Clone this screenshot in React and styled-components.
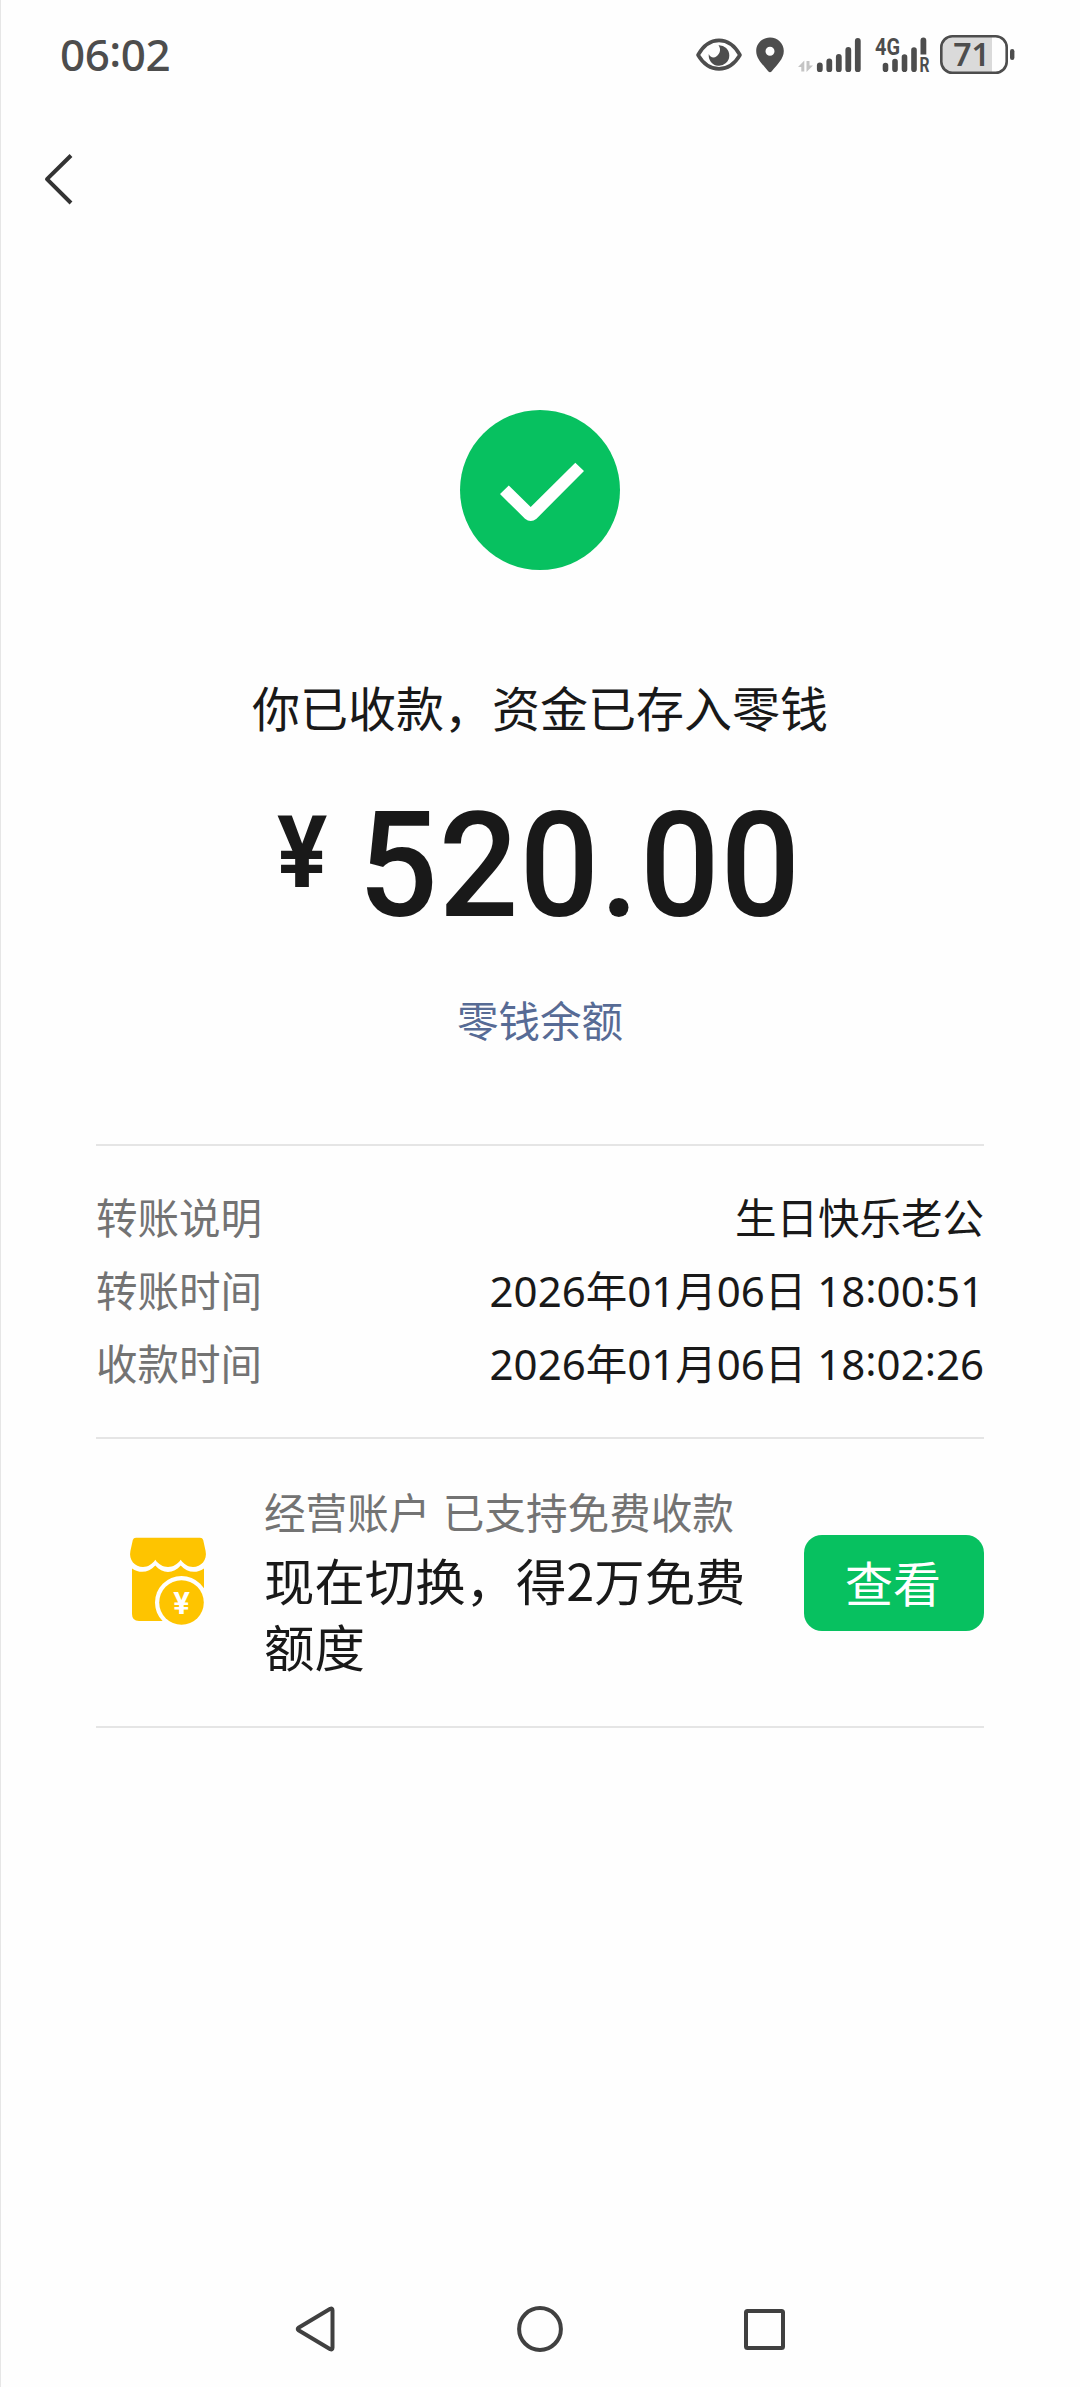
import React from 'react';
import styled, { createGlobalStyle } from 'styled-components';

const cjk = '"Noto Sans CJK SC", sans-serif';
const latin = '"Noto Sans", "Noto Sans CJK SC", sans-serif';

const GlobalStyle = createGlobalStyle`
  * { box-sizing: border-box; }
  body { margin: 0; background: #fefefe; font-family: ${cjk}; }
  svg { display: block; flex: none; overflow: visible; }
`;

const Screen = styled.div`
  width: 1080px;
  height: 2387px;
  display: flex;
  flex-direction: column;
  background: #fefefe;
  color: #191919;
  box-shadow: inset 1px 0 0 #e6e6e6;
`;

const StatusBar = styled.header`
  height: 110px;
  padding: 0 65px 0 60px;
  display: flex;
  align-items: center;
  justify-content: space-between;
  color: #4d4d4d;
`;

const Clock = styled.time`
  margin-bottom: 4px;
  font: 500 44px/50px ${latin};
  letter-spacing: -0.5px;
`;

const Colon = styled.span`
  vertical-align: ${(p) => p.$lift}px;
  line-height: 1;
`;

const StatusIcons = styled.div`
  display: flex;
  align-items: center;
`;

const Gap = styled.span`
  width: ${(p) => p.$w}px;
`;

const TitleBar = styled.nav`
  height: 137px;
  padding-left: 43px;
  display: flex;
  align-items: center;
`;

const Hero = styled.section`
  height: 897px;
  padding-top: 163px;
  display: flex;
  flex-direction: column;
  align-items: center;
`;

const Headline = styled.h1`
  margin: 106px 0 0;
  font-size: 48px;
  line-height: 60px;
  font-weight: 400;
`;

const Amount = styled.div`
  margin-top: 58px;
  padding-left: 5px;
  height: 144px;
  display: flex;
  align-items: flex-start;
  font-family: Roboto, sans-serif;
  font-weight: 500;
`;

const Currency = styled.span`
  font-size: 101px;
  line-height: 118px;
  font-weight: 700;
  margin-right: 20px;
  transform: scaleX(0.93);
`;

const Figure = styled.span`
  font-size: 146px;
  line-height: 145px;
  letter-spacing: 1px;
  transform: scaleX(0.96);
`;

const BalanceLink = styled.a`
  margin-top: 53px;
  font-size: 41.5px;
  line-height: 56px;
  color: #576b95;
`;

const Divider = styled.hr`
  width: 888px;
  height: 2px;
  margin: 0 auto;
  border: 0;
  background: #e5e5e5;
  flex: none;
`;

const Details = styled.dl`
  margin: 0;
  padding: 34px 96px 0;
  height: 291px;
`;

const DetailRow = styled.div`
  height: 73px;
  display: flex;
  justify-content: space-between;
  align-items: center;
  font-size: 41.5px;
  line-height: 73px;
`;

const Term = styled.dt`
  color: #737373;
`;

const Value = styled.dd`
  margin: 0;
  white-space: pre;
`;

const Digits = styled.span`
  font-family: ${latin};
  font-size: 42px;
`;

const Promo = styled.section`
  height: 287px;
  padding: 0 96px 0 130px;
  display: flex;
  align-items: center;
`;

const ShopBadge = styled.div`
  margin-bottom: 4px;
`;

const PromoText = styled.div`
  flex: 1;
  margin: 0 0 11px 58px;
`;

const PromoNote = styled.div`
  font-size: 41.6px;
  line-height: 72px;
  word-spacing: 3px;
  color: #737373;
`;

const PromoTitle = styled.div`
  width: 488px;
  font-size: 50.4px;
  line-height: 66px;
`;

const ViewButton = styled.button`
  width: 180px;
  height: 96px;
  padding: 0 2px 4px 0;
  border: 0;
  border-radius: 18px;
  background: #07c160;
  color: #fff;
  font: 400 48px/72px ${cjk};
`;

const SystemNav = styled.footer`
  margin-top: auto;
  height: 116px;
  padding: 0 295px;
  display: flex;
  justify-content: space-between;
  align-items: center;
`;

const EyeIcon = () => (
  <svg width="46" height="36" viewBox="0 0 46 36" fill="none">
    <path d="M2 18C13-1.5 33-1.5 44 18C33 36.5 13 36.5 2 18Z" stroke="#4d4d4d" strokeWidth="3.6" strokeLinejoin="round" />
    <path d="M22.5 8.2A10.3 10.3 0 1 1 12.8 17C14 20.5 18 21.4 20.6 19.2C24 16.8 25.4 12 22.5 8.2Z" fill="#4d4d4d" />
  </svg>
);

const PinIcon = () => (
  <svg width="28" height="36" viewBox="0 0 28 36">
    <path fill="#4d4d4d" fillRule="evenodd" d="M14 .5C21.8.5 27.8 6.5 27.8 14C27.8 22 21 27.500 15.800 34.300Q14 36 12.200 34.300C7 27.500.2 22 .2 14C.2 6.500 6.200.5 14 .5ZM14 9.800a4.500 4.500 0 1 0 0 9a4.500 4.500 0 1 0 0-9Z" />
  </svg>
);

const SignalIcon = () => (
  <svg width="64" height="36" viewBox="0 0 64 36">
    <path d="M0 30L6.300 23.500V34.500H3.300V30ZM8.500 24H11.500V28.500H15L8.500 35Z" fill="#c4c4c4" />
    <g stroke="#4d4d4d" strokeWidth="5.800" strokeLinecap="round">
      <path d="M21.800 28.300V32.200M31.300 24.500V32.200M40.800 20V32.200M50.300 13V32.200M59.800 4V32.200" />
    </g>
  </svg>
);

const RoamingSignalIcon = () => (
  <svg width="54" height="36" viewBox="0 0 54 36" fill="#4d4d4d">
    <g stroke="#4d4d4d" strokeWidth="5.600" strokeLinecap="round">
      <path d="M10.500 28.500V32.200M20 24.500V32.200M29.500 20V32.200M39 13V32.200" />
    </g>
    <path d="M45.500 3.500a2.900 2.900 0 0 1 5.800 0V17.500H45.500Z" />
    <text x="0" y="17.800" fontFamily="Roboto, sans-serif" fontWeight="700" fontSize="24" textLength="25" lengthAdjust="spacingAndGlyphs" stroke="#fefefe" strokeWidth="2" paintOrder="stroke">4G</text>
    <text x="44.500" y="35.200" fontFamily="Roboto, sans-serif" fontWeight="700" fontSize="19.500" textLength="10" lengthAdjust="spacingAndGlyphs">R</text>
  </svg>
);

const BatteryIcon = () => (
  <svg width="75" height="40" viewBox="0 0 75 40">
    <path d="M12 2H52V37H12A10 10 0 0 1 2 27V12A10 10 0 0 1 12 2Z" fill="#dadada" />
    <rect x="1.300" y="1.300" width="65.400" height="36.400" rx="11" fill="none" stroke="#4d4d4d" strokeWidth="2.600" />
    <rect x="70" y="14" width="4.400" height="11" rx="2.200" fill="#4d4d4d" />
    <text x="31.500" y="31.200" textAnchor="middle" fontFamily="Noto Sans, sans-serif" fontWeight="600" fontSize="32" fill="#4d4d4d">71</text>
  </svg>
);

const BackIcon = () => (
  <svg width="30" height="54" viewBox="0 0 30 54" fill="none" stroke="#333" strokeWidth="4">
    <path d="M28 3.500L4 27.200L28 51" strokeLinejoin="round" />
  </svg>
);

const SuccessIcon = () => (
  <svg width="160" height="160" viewBox="0 0 160 160">
    <circle cx="80" cy="80" r="80" fill="#07c160" />
    <path fill="#fff" d="M48.800 75.400L70.700 97L115.300 52.700L124 61L76.500 108.700Q70.700 113.500 65 108.700L40 84Z" />
  </svg>
);

const ShopIcon = () => (
  <svg width="76" height="88" viewBox="0 0 76 88">
    <g fill="#fec400">
      <path d="M6 .7H70Q72.500.7 73.200 3L75.600 14C77.500 23 71 30 63 30C58 30 54 27.500 50.700 22.800C47.500 27.500 43 30 38 30C33 30 28.500 27.500 25.300 22.800C22 27.500 18 30 13 30C5 30-1.500 23 .4 14L2.800 3Q3.500.7 6 .7Z" />
      <path d="M2 31.500C10 37 19 35.500 25.300 28.500C32 37 44 37 50.700 28.500C57 35.500 66 37 74 31.500V77Q74 84 67 84H9Q2 84 2 77Z" />
    </g>
    <path d="M76 49V88H37Z" fill="#fefefe" />
    <circle cx="51.500" cy="65.500" r="26.500" fill="#fefefe" />
    <circle cx="51.500" cy="65.500" r="22.300" fill="#fec400" />
    <text x="51.500" y="76.800" textAnchor="middle" fontFamily="Roboto, sans-serif" fontWeight="700" fontSize="31" fill="#fff">¥</text>
  </svg>
);

const NavBackIcon = () => (
  <svg width="40" height="46" viewBox="0 0 40 46" fill="none" stroke="#404040" strokeWidth="4">
    <path d="M35.300 2.800Q37.500 2 37.500 4.500V41.500Q37.500 44 35.300 43.200L3.500 24.300Q2 23 3.500 21.700Z" strokeLinejoin="round" />
  </svg>
);

const NavHomeIcon = () => (
  <svg width="46" height="46" viewBox="0 0 46 46" fill="none" stroke="#404040" strokeWidth="4">
    <circle cx="23" cy="23" r="20.900" />
  </svg>
);

const NavRecentIcon = () => (
  <svg width="41" height="41" viewBox="0 0 41 41" fill="none" stroke="#404040" strokeWidth="4">
    <rect x="2" y="2" width="37" height="37" rx="1.500" />
  </svg>
);

const Timestamp = ({ year, month, day, time }) => {
  const [h, m, s] = time.split(':');
  return (
    <>
      <Digits>{year}</Digits>年<Digits>{month}</Digits>月<Digits>{day}</Digits>日
      <Digits>
        {' '}{h}<Colon $lift={4}>:</Colon>{m}<Colon $lift={4}>:</Colon>{s}
      </Digits>
    </>
  );
};

const details = [
  { label: '转账说明', value: '生日快乐老公' },
  { label: '转账时间', value: <Timestamp year="2026" month="01" day="06" time="18:00:51" /> },
  { label: '收款时间', value: <Timestamp year="2026" month="01" day="06" time="18:02:26" /> },
];

export default function App() {
  return (
    <>
      <GlobalStyle />
      <Screen>
        <StatusBar>
          <Clock>06<Colon $lift={4}>:</Colon>02</Clock>
          <StatusIcons>
            <EyeIcon />
            <Gap $w={14} />
            <PinIcon />
            <Gap $w={14} />
            <SignalIcon />
            <Gap $w={13} />
            <RoamingSignalIcon />
            <Gap $w={11} />
            <BatteryIcon />
          </StatusIcons>
        </StatusBar>
        <TitleBar>
          <BackIcon />
        </TitleBar>
        <Hero>
          <SuccessIcon />
          <Headline>你已收款，资金已存入零钱</Headline>
          <Amount>
            <Currency>¥</Currency>
            <Figure>520.00</Figure>
          </Amount>
          <BalanceLink>零钱余额</BalanceLink>
        </Hero>
        <Divider />
        <Details>
          {details.map((d) => (
            <DetailRow key={d.label}>
              <Term>{d.label}</Term>
              <Value>{d.value}</Value>
            </DetailRow>
          ))}
        </Details>
        <Divider />
        <Promo>
          <ShopBadge>
            <ShopIcon />
          </ShopBadge>
          <PromoText>
            <PromoNote>经营账户 已支持免费收款</PromoNote>
            <PromoTitle>现在切换，得2万免费额度</PromoTitle>
          </PromoText>
          <ViewButton>查看</ViewButton>
        </Promo>
        <Divider />
        <SystemNav>
          <NavBackIcon />
          <NavHomeIcon />
          <NavRecentIcon />
        </SystemNav>
      </Screen>
    </>
  );
}
